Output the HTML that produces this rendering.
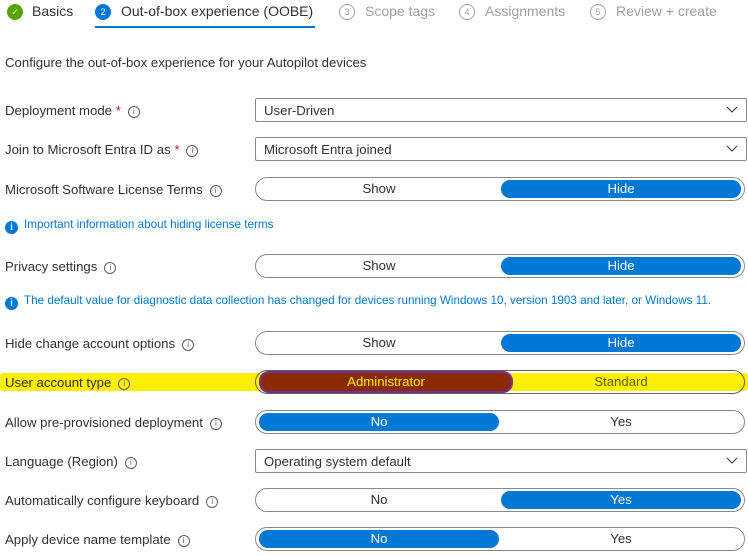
<!DOCTYPE html><html><head><style>
body{margin:0;width:748px;height:556px;background:#fff;font-family:"Liberation Sans",sans-serif;font-size:13.2px;color:#323130;position:relative;overflow:hidden}
.a{position:absolute;white-space:nowrap}
.lbl{position:absolute;left:5px;white-space:nowrap}
.i{display:inline-block;width:10px;height:10px;border:1px solid #605e5c;border-radius:50%;font-size:8px;text-align:center;line-height:10px;margin-left:7px;vertical-align:1px;color:#605e5c}
.dd{position:absolute;left:255px;width:490px;height:22px;border:1px solid #8a8886;border-radius:2px}
.dd span{position:absolute;left:8px;top:4px}
.dd svg{position:absolute;right:8px;top:7px}
.tg{position:absolute;left:255px;width:488px;height:22px;border:1px solid #8a8886;border-radius:12px}
.tg div{position:absolute;top:2px;height:18px;width:240px;border-radius:10px;text-align:center;line-height:18px}
.on{background:#0078d4;color:#fff}
.l{left:3px}.r{right:3px}
.info{position:absolute;left:5px;color:#0078d4;font-size:11.7px;white-space:nowrap}
.info b{display:inline-block;width:13px;height:13px;border-radius:50%;background:#0078d4;color:#fff;font-size:10px;text-align:center;line-height:13px;margin-right:6px;vertical-align:-2px}
.step{position:absolute;top:3px;font-size:14px;white-space:nowrap}
.c{position:absolute;top:4px;width:16px;height:16px;border-radius:50%;text-align:center;line-height:16px;font-size:9px;box-sizing:border-box}
.g{border:1px solid #a19f9d;color:#a19f9d;line-height:14px}
</style></head><body>
<div class="c" style="left:7px;background:#57a300;color:#fff">✓</div>
<div class="step" style="left:32px">Basics</div>
<div class="c" style="left:95px;background:#0078d4;color:#fff">2</div>
<div class="step" style="left:121px">Out-of-box experience (OOBE)</div>
<div class="a" style="left:95px;top:26px;width:220px;height:2px;background:#0078d4"></div>
<div class="c g" style="left:339px">3</div>
<div class="step" style="left:365px;color:#a19f9d">Scope tags</div>
<div class="c g" style="left:459px">4</div>
<div class="step" style="left:485px;color:#a19f9d">Assignments</div>
<div class="c g" style="left:590px">5</div>
<div class="step" style="left:616px;color:#a19f9d">Review + create</div>
<div class="a" style="left:5px;top:55px">Configure the out-of-box experience for your Autopilot devices</div>

<div class="a" style="left:0;top:373px;width:748px;height:18px;background:#ffef00;border-radius:3px"></div>

<div class="lbl" style="top:103px">Deployment mode <span style="color:#a4262c">*</span><span class="i">i</span></div>
<div class="dd" style="top:98px"><span>User-Driven</span><svg width="12" height="8"><path d="M1 1l5 5 5-5" stroke="#323130" fill="none"/></svg></div>
<div class="lbl" style="top:142px">Join to Microsoft Entra ID as <span style="color:#a4262c">*</span><span class="i">i</span></div>
<div class="dd" style="top:137px"><span>Microsoft Entra joined</span><svg width="12" height="8"><path d="M1 1l5 5 5-5" stroke="#323130" fill="none"/></svg></div>
<div class="lbl" style="top:182px">Microsoft Software License Terms<span class="i">i</span></div>
<div class="tg" style="top:177px"><div class="l">Show</div><div class="r on">Hide</div></div>
<div class="info" style="top:218px"><b>i</b>Important information about hiding license terms</div>
<div class="lbl" style="top:259px">Privacy settings<span class="i">i</span></div>
<div class="tg" style="top:254px"><div class="l">Show</div><div class="r on">Hide</div></div>
<div class="info" style="top:294px"><b>i</b>The default value for diagnostic data collection has changed for devices running Windows 10, version 1903 and later, or Windows 11.</div>
<div class="lbl" style="top:336px">Hide change account options<span class="i">i</span></div>
<div class="tg" style="top:331px"><div class="l">Show</div><div class="r on">Hide</div></div>
<div class="lbl" style="top:375px">User account type<span class="i">i</span></div>
<div class="tg" style="top:370px;border-color:#605e5c"><div class="l" style="background:#8b2a00;color:#ffef00;border:2px solid #7030a0;top:0;height:18px;width:250px">Administrator</div><div class="r" style="color:#605e00">Standard</div></div>
<div class="lbl" style="top:415px">Allow pre-provisioned deployment<span class="i">i</span></div>
<div class="tg" style="top:410px"><div class="l on">No</div><div class="r">Yes</div></div>
<div class="lbl" style="top:454px">Language (Region)<span class="i">i</span></div>
<div class="dd" style="top:449px"><span>Operating system default</span><svg width="12" height="8"><path d="M1 1l5 5 5-5" stroke="#323130" fill="none"/></svg></div>
<div class="lbl" style="top:493px">Automatically configure keyboard<span class="i">i</span></div>
<div class="tg" style="top:488px"><div class="l">No</div><div class="r on">Yes</div></div>
<div class="lbl" style="top:532px">Apply device name template<span class="i">i</span></div>
<div class="tg" style="top:527px"><div class="l on">No</div><div class="r">Yes</div></div>
</body></html>
